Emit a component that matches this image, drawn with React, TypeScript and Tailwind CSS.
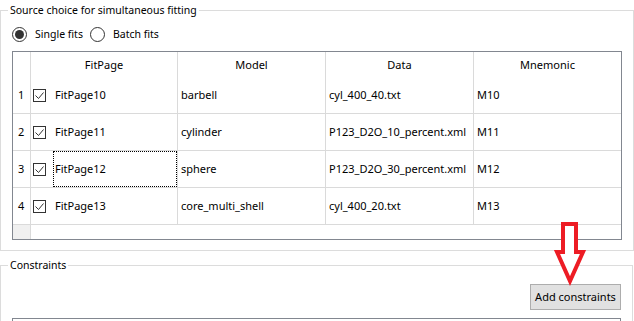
import React from "react";

interface FitRow {
  n: number;
  page: string;
  model: string;
  data: string;
  mnemonic: string;
  focused?: boolean;
}

const rows: FitRow[] = [
  { n: 1, page: "FitPage10", model: "barbell", data: "cyl_400_40.txt", mnemonic: "M10" },
  { n: 2, page: "FitPage11", model: "cylinder", data: "P123_D2O_10_percent.xml", mnemonic: "M11" },
  { n: 3, page: "FitPage12", model: "sphere", data: "P123_D2O_30_percent.xml", mnemonic: "M12", focused: true },
  { n: 4, page: "FitPage13", model: "core_multi_shell", data: "cyl_400_20.txt", mnemonic: "M13" },
];

function CheckBox() {
  return (
    <span className="w-[13px] h-[13px] border border-[#333333] bg-white flex-shrink-0 flex items-center justify-center">
      <svg width="11" height="11" viewBox="0 0 11 11">
        <polyline points="1.5,5.5 4.5,8.5 9.5,2.5" fill="none" stroke="#333333" strokeWidth="1" />
      </svg>
    </span>
  );
}

function Radio({ checked, label }: { checked: boolean; label: string }) {
  return (
    <label className="flex items-center gap-[8px]">
      <span className="w-[15px] h-[15px] rounded-full border border-[#333333] bg-white flex items-center justify-center">
        {checked && <span className="w-[9px] h-[9px] rounded-full bg-[#333333]" />}
      </span>
      <span className="text-[10.5px]">{label}</span>
    </label>
  );
}

export default function App() {
  return (
    <div className="relative w-[634px] h-[321px] overflow-hidden bg-white text-[11px] leading-[16px] text-black font-['Segoe_UI','Noto_Sans',sans-serif]">
      <fieldset className="mt-[2px] w-[633px] h-[249px] border border-[#dcdcdc] pl-[11px] pr-[11px]">
        <legend className="-ml-[4px] px-[2px] leading-[16px] text-[10.5px]">Source choice for simultaneous fitting</legend>
        <div className="mt-[8px] flex items-center gap-[7px]">
          <Radio checked label="Single fits" />
          <Radio checked={false} label="Batch fits" />
        </div>

        <div className="mt-[9px] w-[610px] h-[189px] border border-[#828790] flex flex-col">
          <div className="flex h-[25px] flex-shrink-0">
            <div className="w-[18px] border-r border-[#dadada]" />
            <div className="w-[147px] border-r border-[#dadada] flex items-center justify-center">FitPage</div>
            <div className="w-[148px] border-r border-[#dadada] flex items-center justify-center">Model</div>
            <div className="w-[148px] border-r border-[#dadada] flex items-center justify-center">Data</div>
            <div className="w-[147px] flex items-center justify-center">Mnemonic</div>
          </div>
          {rows.map((r) => (
            <div key={r.n} className="flex h-[37px] flex-shrink-0 border-b border-[#dadada]">
              <div className="w-[18px] border-r border-[#dadada] flex items-center pl-[5px]">{r.n}</div>
              <div className="w-[147px] border-r border-[#dadada] flex items-center pl-[2px] gap-[7px]">
                <CheckBox />
                <div className={`flex-1 self-stretch flex items-center pl-[1px] border ${r.focused ? "border-dotted border-black" : "border-transparent"}`}>
                  {r.page}
                </div>
              </div>
              <div className="w-[148px] border-r border-[#dadada] flex items-center pl-[3px]">{r.model}</div>
              <div className="w-[148px] border-r border-[#dadada] flex items-center pl-[3px]">{r.data}</div>
              <div className="w-[147px] flex items-center pl-[3px]">{r.mnemonic}</div>
            </div>
          ))}
          <div className="flex flex-1">
            <div className="w-[18px] bg-[#f0f0f0] border-r border-[#dadada]" />
          </div>
        </div>
      </fieldset>

      <fieldset className="mt-[6px] w-[633px] h-[80px] border border-[#dcdcdc] pl-[11px] pr-[11px]">
        <legend className="-ml-[4px] px-[2px] leading-[16px] text-[10.5px]">Constraints</legend>
        <div className="mt-[11px] flex justify-end">
          <button className="w-[91px] h-[26px] bg-[#e1e1e1] border border-[#adadad] flex items-center justify-center">
            Add constraints
          </button>
        </div>
        <div className="mt-[8px] h-[20px] border border-[#828790]" />
      </fieldset>

      <svg className="absolute left-[553px] top-[220px]" width="34" height="68" viewBox="0 0 34 68">
        <polygon
          points="10,4 23,4 23,32 30,32 17,61 4,32 10,32"
          fill="white"
          stroke="#ed1c24"
          strokeWidth="4"
        />
      </svg>
    </div>
  );
}
